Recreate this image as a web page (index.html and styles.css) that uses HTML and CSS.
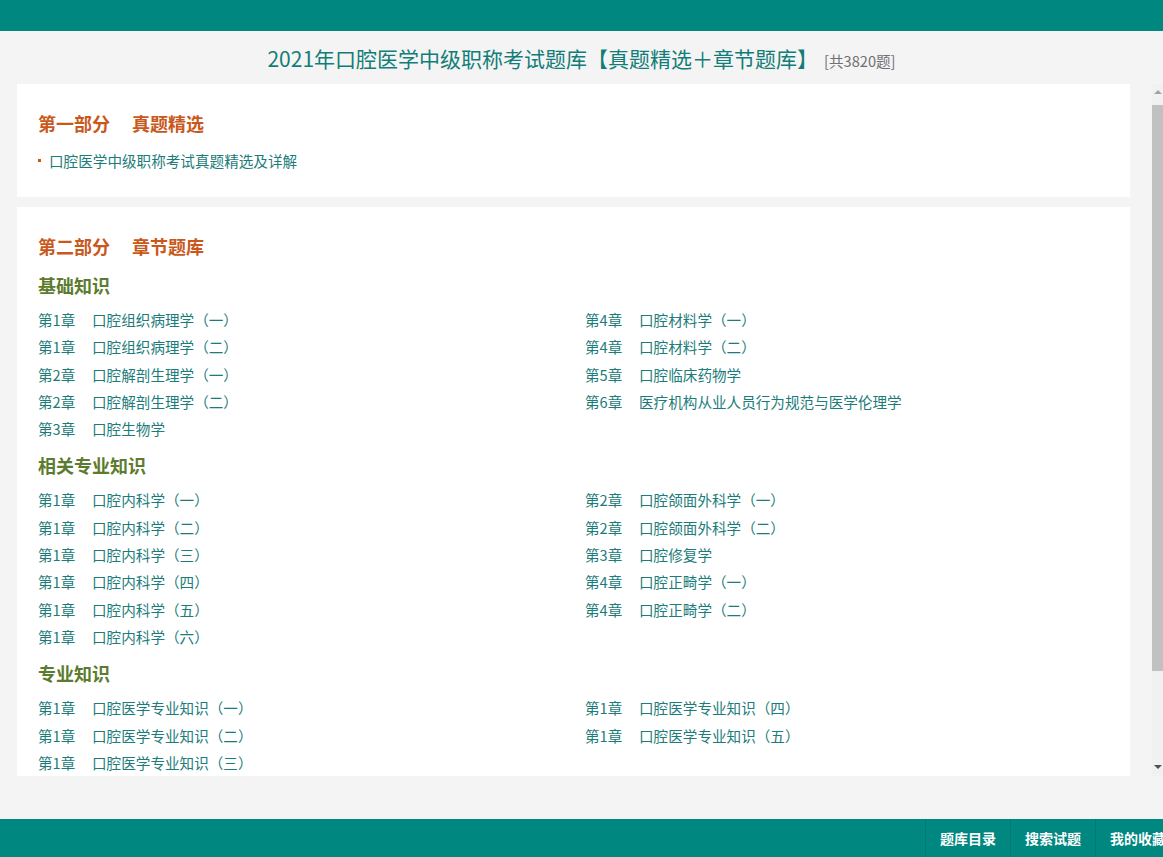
FILE: index.html
```html
<!DOCTYPE html>
<html lang="zh-CN">
<head>
<meta charset="utf-8">
<title>2021年口腔医学中级职称考试题库</title>
<link rel="stylesheet" href="styles.css">
</head>
<body>
<div class="page">
  <div class="topbar"></div>
  <h1 class="title">2021年口腔医学中级职称考试题库【真题精选＋章节题库】<span class="count">[共3820题]</span></h1>
  <div class="viewport">
    <div class="scroller">
      <section class="card card-first">
        <h2 class="part"><span>第一部分</span><span class="part-name">真题精选</span></h2>
        <ul class="bullets">
          <li><a href="#">口腔医学中级职称考试真题精选及详解</a></li>
        </ul>
      </section>
      <section class="card card-second">
        <h2 class="part"><span>第二部分</span><span class="part-name">章节题库</span></h2>

        <h3 class="sub">基础知识</h3>
        <ul class="chapters">
          <li><span class="ch">第1章</span>口腔组织病理学（一）</li>
          <li><span class="ch">第1章</span>口腔组织病理学（二）</li>
          <li><span class="ch">第2章</span>口腔解剖生理学（一）</li>
          <li><span class="ch">第2章</span>口腔解剖生理学（二）</li>
          <li><span class="ch">第3章</span>口腔生物学</li>
          <li><span class="ch">第4章</span>口腔材料学（一）</li>
          <li><span class="ch">第4章</span>口腔材料学（二）</li>
          <li><span class="ch">第5章</span>口腔临床药物学</li>
          <li><span class="ch">第6章</span>医疗机构从业人员行为规范与医学伦理学</li>
        </ul>

        <h3 class="sub">相关专业知识</h3>
        <ul class="chapters">
          <li><span class="ch">第1章</span>口腔内科学（一）</li>
          <li><span class="ch">第1章</span>口腔内科学（二）</li>
          <li><span class="ch">第1章</span>口腔内科学（三）</li>
          <li><span class="ch">第1章</span>口腔内科学（四）</li>
          <li><span class="ch">第1章</span>口腔内科学（五）</li>
          <li><span class="ch">第1章</span>口腔内科学（六）</li>
          <li><span class="ch">第2章</span>口腔颌面外科学（一）</li>
          <li><span class="ch">第2章</span>口腔颌面外科学（二）</li>
          <li><span class="ch">第3章</span>口腔修复学</li>
          <li><span class="ch">第4章</span>口腔正畸学（一）</li>
          <li><span class="ch">第4章</span>口腔正畸学（二）</li>
        </ul>

        <h3 class="sub">专业知识</h3>
        <ul class="chapters">
          <li><span class="ch">第1章</span>口腔医学专业知识（一）</li>
          <li><span class="ch">第1章</span>口腔医学专业知识（二）</li>
          <li><span class="ch">第1章</span>口腔医学专业知识（三）</li>
          <li><span class="ch">第1章</span>口腔医学专业知识（四）</li>
          <li><span class="ch">第1章</span>口腔医学专业知识（五）</li>
        </ul>
      </section>
    </div>
    <div class="vscroll" aria-hidden="true">
      <div class="vbtn vbtn-up"><span class="arrow-up"></span></div>
      <div class="vtrack"><div class="vthumb"></div></div>
      <div class="vbtn vbtn-down"><span class="arrow-down"></span></div>
    </div>
  </div>
  <div class="spacer"></div>
  <footer class="footer">
    <nav class="footnav">
      <a href="#" class="fbtn">题库目录</a>
      <a href="#" class="fbtn">搜索试题</a>
      <a href="#" class="fbtn">我的收藏</a>
    </nav>
  </footer>
</div>
</body>
</html>
```

FILE: styles.css
```css
* { box-sizing: border-box; }

html, body {
  margin: 0;
  padding: 0;
  height: 100%;
  background: #f4f4f4;
  font-family: "Noto Sans CJK SC", "Microsoft YaHei", sans-serif;
  color: #1b7c7a;
}

.page {
  display: flex;
  flex-direction: column;
  height: 857px;
  overflow: hidden;
}

.page > * {
  flex-shrink: 0;
}

.topbar {
  height: 31px;
  background: #008780;
}

.title {
  height: 53px;
  margin: 0;
  padding-top: 13px;
  text-align: center;
  font-size: 21px;
  font-weight: normal;
  line-height: 28px;
  color: #127d78;
  white-space: nowrap;
}

.count {
  margin-left: 6px;
  font-size: 14.6px;
  color: #707070;
}

.viewport {
  height: 692px;
  min-height: 0;
  display: flex;
  margin-left: 17px;
  overflow: hidden;
}

.scroller {
  flex: 1 1 auto;
  min-height: 0;
  overflow: hidden;
}

.vscroll {
  flex: 0 0 11px;
  display: flex;
  flex-direction: column;
  background: #f1f1f1;
}

.vbtn {
  flex: 0 0 17px;
  display: flex;
  justify-content: center;
}

.vbtn-up { align-items: flex-start; padding-top: 6px; }
.vbtn-down { align-items: flex-end; padding-bottom: 7px; }

.arrow-up {
  width: 0;
  height: 0;
  border-left: 4px solid transparent;
  border-right: 4px solid transparent;
  border-bottom: 4px solid #a3a3a3;
}

.arrow-down {
  width: 0;
  height: 0;
  border-left: 4px solid transparent;
  border-right: 4px solid transparent;
  border-top: 4px solid #505050;
}

.vtrack {
  flex: 1 1 auto;
  padding-top: 4px;
}

.vthumb {
  height: 566px;
  background: #c1c1c1;
}

.card {
  width: 1113px;
  background: #fff;
  padding: 24px 0 23px 21px;
  margin-bottom: 10px;
}

.card-second {
  padding-bottom: 120px;
}

.part {
  margin: 0 0 9px;
  font-size: 18px;
  line-height: 30px;
  font-weight: bold;
  color: #c9581b;
}

.part-name {
  margin-left: 22px;
}

.bullets {
  list-style: none;
  margin: 9px 0 0;
  padding: 0;
}

.bullets li {
  display: flex;
  align-items: center;
  font-size: 14.6px;
  line-height: 27px;
}

.bullets li::before {
  content: "";
  width: 3px;
  height: 3px;
  background: #c9581b;
  margin-right: 8px;
}

.bullets a {
  color: #1b7c7a;
  text-decoration: none;
}

.sub {
  margin: 8px 0 6px;
  font-size: 18px;
  line-height: 30px;
  font-weight: bold;
  color: #5d7b2f;
}

.chapters {
  list-style: none;
  margin: 0;
  padding: 0;
  width: 1094px;
  column-count: 2;
  column-gap: 0;
}

.chapters li {
  font-size: 14.6px;
  line-height: 27.3px;
  white-space: nowrap;
  color: #1b7c7a;
  break-inside: avoid;
}

.ch {
  display: inline-block;
  width: 54px;
}

.spacer {
  height: 43px;
}

.footer {
  height: 38px;
  background: #008780;
  display: flex;
  justify-content: flex-end;
}

.footnav {
  display: flex;
  margin-right: -17px;
}

.fbtn {
  width: 85px;
  height: 38px;
  border-left: 1px solid #007a73;
  color: #fff;
  font-size: 14px;
  font-weight: bold;
  line-height: 38px;
  text-align: center;
  text-decoration: none;
}
```
